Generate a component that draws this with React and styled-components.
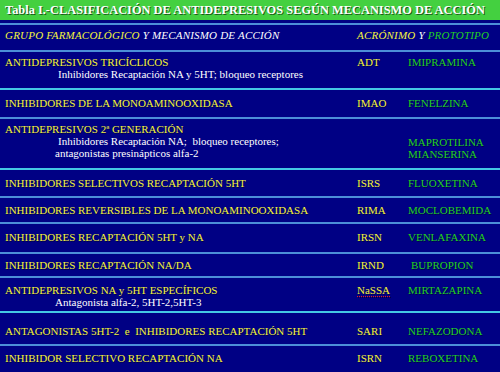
import React from "react";
import styled, { createGlobalStyle } from "styled-components";

const SERIF = `"Liberation Serif", "Times New Roman", serif`;

const Global = createGlobalStyle`
  html, body { margin: 0; padding: 0; background: #000084; }
  body { width: 500px; height: 372px; overflow: hidden; font-family: ${SERIF}; }
`;

const Page = styled.div`
  width: 500px;
  height: 372px;
  background: #000084;
  display: flex;
  flex-direction: column;
  font-family: ${SERIF};
`;

const TitleBar = styled.div`
  height: 20px;
  background: #44d040;
  color: #fff;
  font-family: ${SERIF};
  font-weight: bold;
  font-size: 12.4px;
  line-height: 20px;
  padding-left: 5px;
  white-space: nowrap;
  text-shadow: 1px 1px 0 #1a5a1a;
  margin-bottom: 3px;
`;

const Row = styled.div`
  box-sizing: border-box;
  height: ${(p) => p.$h}px;
  padding-top: ${(p) => p.$pt}px;
  padding-left: 5px;
  display: grid;
  grid-template-columns: 352px 51px 1fr;
  align-items: start;
  border-bottom: ${(p) => (p.$line ? `2px solid ${p.$line}` : "none")};
  border-top: ${(p) => (p.$top ? `2px solid ${p.$top}` : "none")};
  font-family: ${SERIF};
  font-size: 11px;
  line-height: 12px;
  white-space: pre;
`;

const Cell = styled.div`
  display: flex;
  flex-direction: column;
  padding-top: ${(p) => p.$offset || 0}px;
  padding-left: ${(p) => p.$indent || 0}px;
`;

const Main = styled.span`
  color: #f4f43c;
  text-shadow: 1px 1px 0 rgba(0, 0, 0, 0.45);
`;

const Sub = styled.span`
  color: #ffffff;
  font-size: 11px;
  padding-left: ${(p) => p.$indent}px;
`;

const Acr = styled.span`
  color: #f4f43c;
  align-self: flex-start;
  text-shadow: 1px 1px 0 rgba(0, 0, 0, 0.45);
  text-decoration: ${(p) => (p.$flag ? "underline dotted #e02020" : "none")};
  text-underline-offset: 2px;
`;

const Drug = styled.span`
  color: #22d022;
  text-shadow: 1px 1px 0 rgba(0, 0, 0, 0.45);
`;

const Head = styled.span`
  font-style: italic;
  font-size: 11px;
  letter-spacing: 0.2px;
  color: ${(p) => p.$c};
`;

const YELLOW = "#f4f43c";
const GREEN = "#22d022";
const BLUE = "#4c8ed8";
const CYAN = "#44c8e4";

const rows = [
  { h: 38, pt: 4, line: CYAN, main: "ANTIDEPRESIVOS TRICÍCLICOS", subs: [["Inhibidores Recaptación NA y 5HT; bloqueo receptores", 53]], acr: "ADT", drugs: ["IMIPRAMINA"] },
  { h: 29, pt: 7, line: BLUE, main: "INHIBIDORES DE LA MONOAMINOOXIDASA", acr: "IMAO", drugs: ["FENELZINA"] },
  { h: 51, pt: 4, line: CYAN, main: "ANTIDEPRESIVOS 2ª GENERACIÓN", subs: [["Inhibidores Recaptación NA;  bloqueo receptores;", 53], ["antagonistas presinápticos alfa-2", 50]], acr: "", drugs: ["MAPROTILINA", "MIANSERINA"], drugOffset: 13 },
  { h: 29, pt: 7, line: BLUE, main: "INHIBIDORES SELECTIVOS RECAPTACIÓN 5HT", acr: "ISRS", drugs: ["FLUOXETINA"] },
  { h: 26, pt: 6, line: BLUE, main: "INHIBIDORES REVERSIBLES DE LA MONOAMINOOXIDASA", acr: "RIMA", drugs: ["MOCLOBEMIDA"] },
  { h: 30, pt: 7, line: BLUE, main: "INHIBIDORES RECAPTACIÓN 5HT y NA", acr: "IRSN", drugs: ["VENLAFAXINA"] },
  { h: 24, pt: 5, line: BLUE, main: "INHIBIDORES RECAPTACIÓN NA/DA", acr: "IRND", drugs: ["BUPROPION"], drugIndent: 3 },
  { h: 35, pt: 6, line: CYAN, main: "ANTIDEPRESIVOS NA y 5HT ESPECÍFICOS", subs: [["Antagonista alfa-2, 5HT-2,5HT-3", 50]], acr: "NaSSA", flag: true, drugs: ["MIRTAZAPINA"] },
  { h: 33, pt: 12, line: BLUE, main: "ANTAGONISTAS 5HT-2  e  INHIBIDORES RECAPTACIÓN 5HT", acr: "SARI", drugs: ["NEFAZODONA"] },
  { h: 26, pt: 6, line: null, main: "INHIBIDOR SELECTIVO RECAPTACIÓN NA", acr: "ISRN", drugs: ["REBOXETINA"] },
];

export default function App() {
  return (
    <Page>
      <Global />
      <TitleBar>Tabla I.-CLASIFICACIÓN DE ANTIDEPRESIVOS SEGÚN MECANISMO DE ACCIÓN</TitleBar>
      <Row $h={29} $pt={4} $top={BLUE} $line={BLUE}>
        <Cell>
          <span>
            <Head $c={YELLOW}>GRUPO FARMACOLÓGICO</Head>
            <Head $c="#fff"> Y MECANISMO DE ACCIÓN</Head>
          </span>
        </Cell>
        <Cell style={{ gridColumn: "2 / 4" }}>
          <span>
            <Head $c={YELLOW}>ACRÓNIMO</Head>
            <Head $c="#fff"> Y </Head>
            <Head $c={GREEN}>PROTOTIPO</Head>
          </span>
        </Cell>
      </Row>
      {rows.map((r, i) => (
        <Row key={i} $h={r.h} $pt={r.pt} $line={r.line}>
          <Cell>
            <Main>{r.main}</Main>
            {(r.subs || []).map(([t, ind], j) => (
              <Sub key={j} $indent={ind}>{t}</Sub>
            ))}
          </Cell>
          <Cell>
            <Acr $flag={r.flag}>{r.acr}</Acr>
          </Cell>
          <Cell $offset={r.drugOffset} $indent={r.drugIndent}>
            {r.drugs.map((d, j) => (
              <Drug key={j}>{d}</Drug>
            ))}
          </Cell>
        </Row>
      ))}
    </Page>
  );
}
